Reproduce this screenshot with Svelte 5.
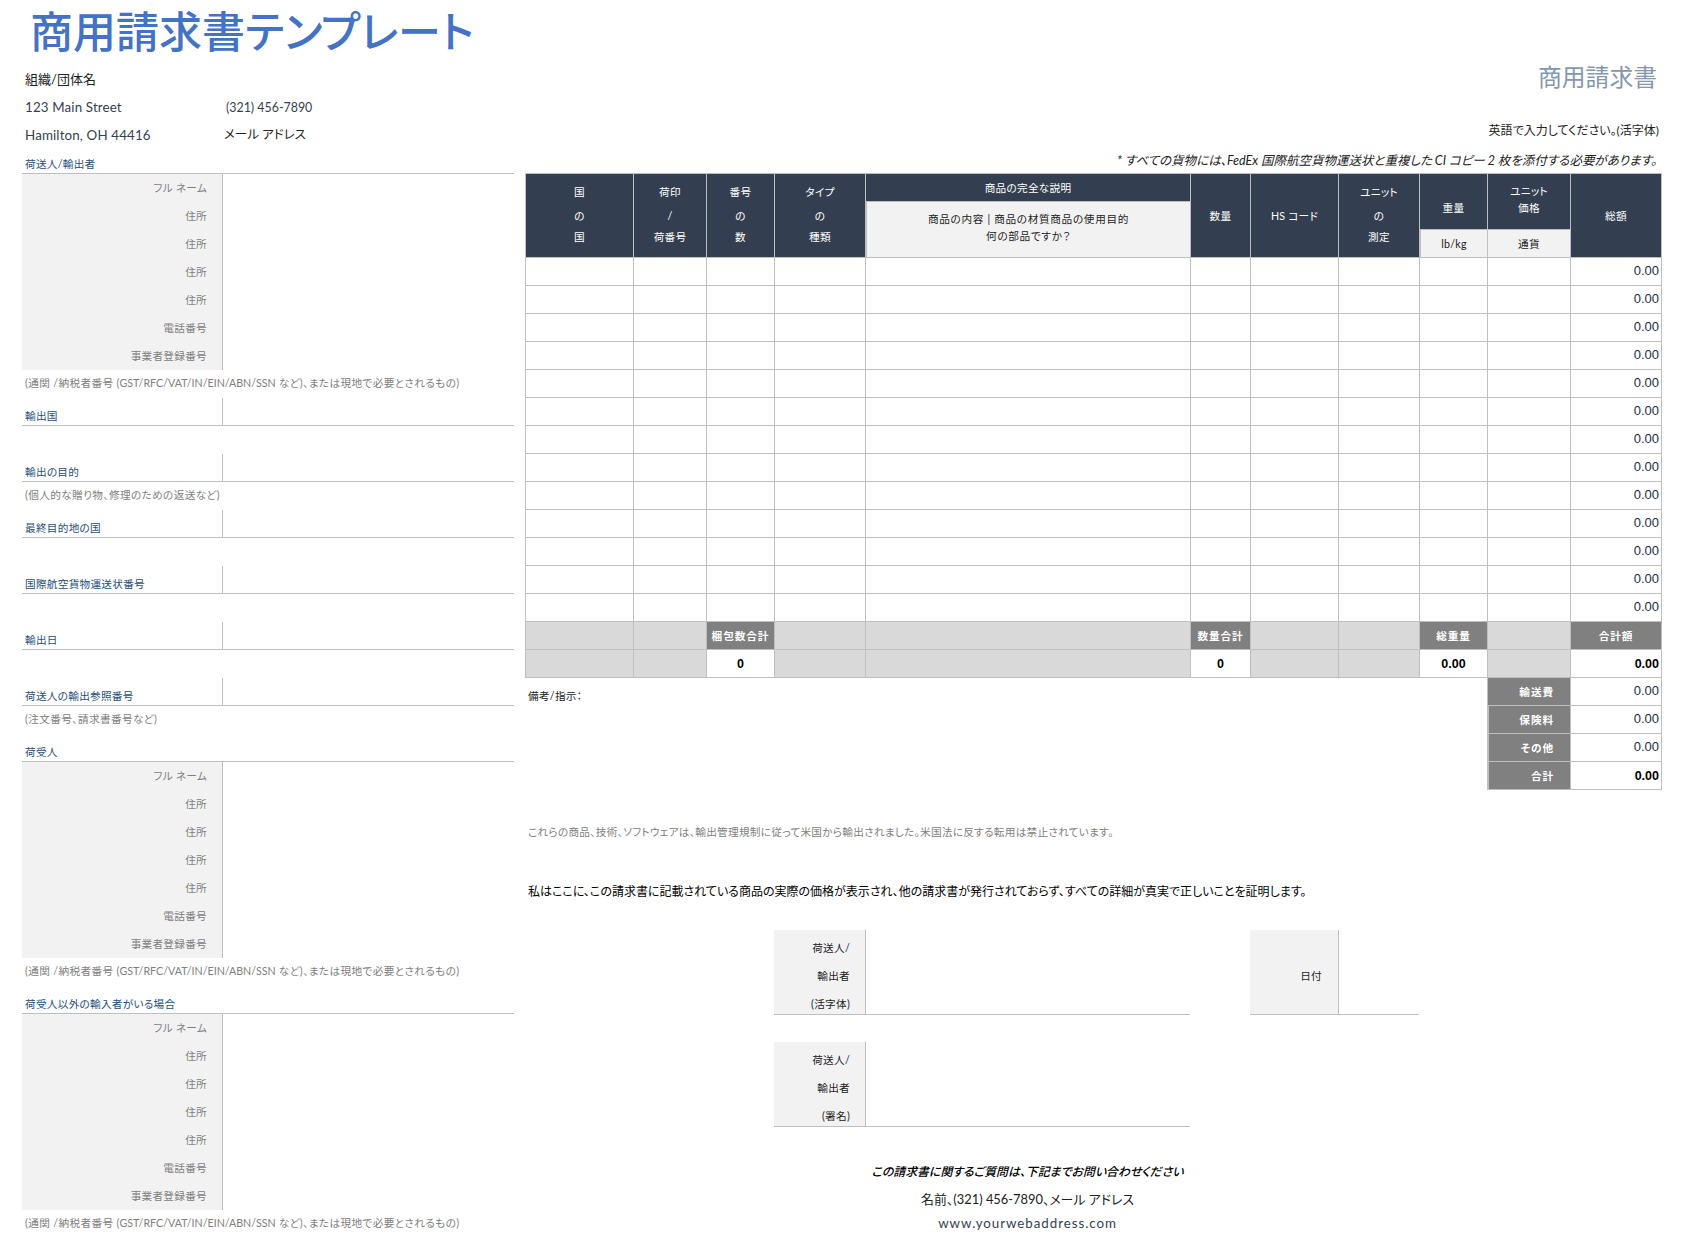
<script>
  const cols = [109, 73, 68, 91, 325, 60, 88, 81, 68, 83, 91];
  const party = ['フル ネーム', '住所', '住所', '住所', '住所', '電話番号', '事業者登録番号'];
  const rows = Array.from({ length: 13 });
  const stacks = [
    ['国', 'の', '国'],
    ['荷印', '/', '荷番号'],
    ['番号', 'の', '数'],
    ['タイプ', 'の', '種類']
  ];
  const extras = [
    ['輸送費', false],
    ['保険料', false],
    ['その他', false],
    ['合計', true]
  ];
</script>

{#snippet partyBlock()}
  <div class="party">
    <div class="party-labels">
      {#each party as label}
        <div class="party-label">{label}</div>
      {/each}
    </div>
    <div class="party-fill"></div>
  </div>
  <div class="row note"><span>(通関 /納税者番号 <span class="latin">(GST/RFC/VAT/IN/EIN/ABN/SSN</span> など)、または現地で必要とされるもの)</span></div>
{/snippet}

{#snippet field(label)}
  <div class="row field">
    <span class="navy">{label}</span>
    <span class="field-fill"></span>
  </div>
{/snippet}

<div class="page">
  <section class="left">
    <h1 class="title">商用請求書テンプレート</h1>
    <div class="row org">組織/団体名</div>
    <div class="row contact"><span class="c1">123 Main Street</span><span class="tel">(321) 456-7890</span></div>
    <div class="row contact"><span class="c1">Hamilton, OH 44416</span><span class="jp">メール アドレス</span></div>
    <div class="row section navy">荷送人/輸出者</div>
    {@render partyBlock()}
    {@render field('輸出国')}
    <div class="row"></div>
    {@render field('輸出の目的')}
    <div class="row note">(個人的な贈り物、修理のための返送など)</div>
    {@render field('最終目的地の国')}
    <div class="row"></div>
    {@render field('国際航空貨物運送状番号')}
    <div class="row"></div>
    {@render field('輸出日')}
    <div class="row"></div>
    {@render field('荷送人の輸出参照番号')}
    <div class="row note">(注文番号、請求書番号など)</div>
    <div class="row section navy">荷受人</div>
    {@render partyBlock()}
    <div class="row section navy">荷受人以外の輸入者がいる場合</div>
    {@render partyBlock()}
  </section>

  <section class="right">
    <header class="head">
      <div class="doc-title">商用請求書</div>
      <div class="hint">英語で入力してください。(活字体)</div>
      <div class="warn">* すべての貨物には、FedEx 国際航空貨物運送状と重複した CI コピー 2 枚を添付する必要があります。</div>
    </header>

    <table>
      <colgroup>
        {#each cols as w}
          <col style="width:{w}px" />
        {/each}
      </colgroup>
      <thead>
        <tr>
          {#each stacks as s}
            <th rowspan="3" class="stack">
              {#each s as line}<span>{line}</span>{/each}
            </th>
          {/each}
          <th>商品の完全な説明</th>
          <th rowspan="3">数量</th>
          <th rowspan="3">HS コード</th>
          <th rowspan="3" class="stack"><span>ユニット</span><span>の</span><span>測定</span></th>
          <th rowspan="2" class="weight">重量</th>
          <th rowspan="2" class="pair"><span>ユニット</span><span>価格</span></th>
          <th rowspan="3">総額</th>
        </tr>
        <tr>
          <th rowspan="2" class="light sub"><span>商品の内容 | 商品の材質商品の使用目的</span><span>何の部品ですか？</span></th>
        </tr>
        <tr>
          <th class="light">lb/kg</th>
          <th class="light">通貨</th>
        </tr>
      </thead>
      <tbody>
        {#each rows as _}
          <tr>
            {#each cols.slice(0, 10) as _c}<td></td>{/each}
            <td class="num">0.00</td>
          </tr>
        {/each}
        <tr>
          <td class="g"></td><td class="g"></td><td class="d">梱包数合計</td><td class="g"></td><td class="g"></td>
          <td class="d">数量合計</td><td class="g"></td><td class="g"></td><td class="d">総重量</td><td class="g"></td><td class="d">合計額</td>
        </tr>
        <tr>
          <td class="g"></td><td class="g"></td><td class="val">0</td><td class="g"></td><td class="g"></td>
          <td class="val">0</td><td class="g"></td><td class="g"></td><td class="val">0.00</td><td class="g"></td><td class="num strong">0.00</td>
        </tr>
        {#each extras as [label, strong], i}
          <tr>
            {#if i === 0}
              <td colspan="9" rowspan="4" class="remarks">備考/指示：</td>
            {/if}
            <td class="d end">{label}</td>
            <td class="num" class:strong>0.00</td>
          </tr>
        {/each}
      </tbody>
    </table>

    <p class="legal">これらの商品、技術、ソフトウェアは、輸出管理規制に従って米国から輸出されました。米国法に反する転用は禁止されています。</p>
    <p class="cert">私はここに、この請求書に記載されている商品の実際の価格が表示され、他の請求書が発行されておらず、すべての詳細が真実で正しいことを証明します。</p>

    <div class="sign">
      <div class="sign-label"><span>荷送人/</span><span>輸出者</span><span>(活字体)</span></div>
      <div class="sign-fill"></div>
      <div class="date-label">日付</div>
      <div class="date-fill"></div>
    </div>
    <div class="sign second">
      <div class="sign-label"><span>荷送人/</span><span>輸出者</span><span>(署名)</span></div>
      <div class="sign-fill"></div>
    </div>

    <footer class="foot">
      <div class="ask">この請求書に関するご質問は、下記までお問い合わせください</div>
      <div class="who">名前、(321) 456-7890、メール アドレス</div>
      <div class="web">www.yourwebaddress.com</div>
    </footer>
  </section>
</div>

<style>
  :global(body) {
    margin: 0;
    background: #fff;
  }
  .page {
    display: flex;
    gap: 11px;
    padding-left: 22px;
    width: 1666px;
    height: 1251px;
    overflow: hidden;
    font-family: "Lato", "Noto Sans CJK JP", sans-serif;
    font-size: 10.67px;
    letter-spacing: 0.25px;
    font-feature-settings: "palt";
    color: #000;
  }
  .left {
    width: 492px;
    flex: none;
  }
  .right {
    width: 1137px;
    flex: none;
  }
  .title {
    height: 62px;
    margin: 0;
    padding-left: 8px;
    font-size: 43px;
    line-height: 64px;
    font-weight: 500;
    letter-spacing: 0;
    color: #4472c4;
    white-space: nowrap;
  }
  .row {
    height: 28px;
    box-sizing: border-box;
    display: flex;
    align-items: center;
    padding-left: 3px;
    white-space: nowrap;
  }
  .org {
    font-size: 13px;
    letter-spacing: 0;
    color: #222;
    padding-top: 4px;
  }
  .contact {
    font-size: 13.33px;
    color: #333f50;
    letter-spacing: 0.15px;
    padding-top: 6px;
  }
  .c1 {
    width: 201px;
  }
  .tel {
    font-size: 12.4px;
    letter-spacing: 0;
  }
  .jp {
    margin-left: -2px;
    color: #222;
    font-size: 12.5px;
    letter-spacing: 0;
    line-height: 14px;
  }
  .navy {
    color: #1f4e79;
  }
  .section {
    align-items: flex-end;
    padding-bottom: 2px;
    border-bottom: 1px solid #bfbfbf;
  }
  .party {
    display: grid;
    grid-template-columns: 200px 1fr;
  }
  .party-labels {
    background: #f2f2f2;
  }
  .party-label {
    height: 28px;
    line-height: 28px;
    text-align: right;
    padding-right: 15px;
    color: #7f7f7f;
  }
  .party-fill,
  .field-fill {
    border-left: 1px solid #bfbfbf;
  }
  .note {
    color: #808080;
    padding-bottom: 3px;
    letter-spacing: 0.35px;
  }
  .latin {
    letter-spacing: 0;
  }
  .field {
    padding: 0;
    display: grid;
    grid-template-columns: 200px 1fr;
    align-items: stretch;
    border-bottom: 1px solid #bfbfbf;
  }
  .field .navy {
    align-self: end;
    padding: 0 0 2px 3px;
  }
  .head {
    height: 173px;
    display: flex;
    flex-direction: column;
    align-items: flex-end;
    padding: 62px 5px 0 0;
    box-sizing: border-box;
    white-space: nowrap;
    letter-spacing: 0;
  }
  .doc-title {
    height: 56px;
    line-height: 31px;
    font-size: 23.8px;
    color: #8497b0;
  }
  .hint {
    height: 28px;
    line-height: 25px;
    font-size: 12px;
    color: #222;
    margin-right: -2px;
  }
  .warn {
    height: 27px;
    line-height: 29px;
    font-size: 12.5px;
    font-style: italic;
    color: #222;
  }
  table {
    table-layout: fixed;
    width: 1137px;
    border-collapse: separate;
    border-spacing: 0;
    border-top: 1px solid #bfbfbf;
  }
  tr {
    height: 28px;
  }
  th,
  td {
    height: 28px;
    padding: 0;
    box-sizing: border-box;
    border-right: 1px solid #bfbfbf;
    border-bottom: 1px solid #bfbfbf;
    font-size: 10.67px;
    font-weight: 400;
    text-align: center;
    vertical-align: middle;
    white-space: nowrap;
  }
  th:first-child,
  td:first-child {
    border-left: 1px solid #bfbfbf;
  }
  th {
    background: #333f50;
    color: #fff;
  }
  th.stack {
    vertical-align: top;
    padding-top: 7px;
  }
  th.stack span {
    display: block;
    line-height: 21px;
  }
  th.stack span:first-child {
    margin-bottom: 3px;
  }
  th.weight {
    padding-top: 12px;
  }
  th.pair {
    padding-bottom: 5px;
  }
  th.pair span {
    display: block;
    line-height: 17px;
  }
  th.light {
    background: #f2f2f2;
    color: #222;
  }
  th.sub {
    padding-bottom: 6px;
  }
  th.sub span {
    display: block;
    line-height: 17px;
    letter-spacing: 0.65px;
  }
  .num {
    text-align: right;
    padding: 0 2px 2px 0;
    font-family: "Liberation Sans", sans-serif;
    font-size: 13px;
    letter-spacing: 0;
    color: #1f2a44;
  }
  .strong {
    font-weight: 700;
    color: #000;
    font-size: 12.5px;
    padding-bottom: 0;
  }
  .g {
    background: #d9d9d9;
  }
  .d {
    background: #808080;
    color: #fff;
    font-weight: 700;
    letter-spacing: 0.9px;
  }
  .end {
    text-align: right;
    padding-right: 16px;
  }
  .val {
    font-family: "Liberation Sans", sans-serif;
    font-size: 12.5px;
    font-weight: 700;
    letter-spacing: 0;
    background: #fff;
  }
  td.remarks {
    border: none;
    border-right: 1px solid #bfbfbf;
    vertical-align: top;
    text-align: left;
    padding: 10px 0 0 3px;
    color: #222;
  }
  .legal {
    margin: 28px 0 0;
    height: 28px;
    line-height: 28px;
    padding-left: 3px;
    color: #808080;
    white-space: nowrap;
  }
  .cert {
    margin: 28px 0 0;
    height: 28px;
    line-height: 36px;
    padding-left: 3px;
    font-size: 12px;
    letter-spacing: 0;
    white-space: nowrap;
  }
  .sign {
    margin-top: 28px;
    height: 84px;
    display: grid;
    grid-template-columns: 91px 325px 60px 88px 81px;
    margin-left: 249px;
    width: 645px;
  }
  .second {
    grid-template-columns: 91px 325px;
    width: 416px;
  }
  .sign-label {
    background: #f2f2f2;
    border-bottom: 1px solid #bfbfbf;
    text-align: right;
    padding-right: 15px;
    display: flex;
    flex-direction: column;
    color: #222;
    box-sizing: border-box;
  }
  .sign-label span {
    height: 28px;
    flex: none;
    line-height: 36px;
    white-space: nowrap;
  }
  .sign-fill,
  .date-fill {
    border-left: 1px solid #bfbfbf;
    border-bottom: 1px solid #bfbfbf;
  }
  .sign-fill {
    grid-column: 2;
  }
  .date-label {
    grid-column: 4;
    background: #f2f2f2;
    border-bottom: 1px solid #bfbfbf;
    box-sizing: border-box;
    display: flex;
    align-items: center;
    justify-content: flex-end;
    padding: 6px 16px 0 0;
    color: #222;
  }
  .date-fill {
    grid-column: 5;
  }
  .foot {
    margin: 32px 0 0 340px;
    width: 325px;
    text-align: center;
    white-space: nowrap;
    letter-spacing: 0;
  }
  .ask {
    height: 28px;
    line-height: 28px;
    font-size: 11.9px;
    font-style: italic;
    font-weight: 500;
  }
  .who {
    height: 26px;
    line-height: 26px;
    font-size: 12.9px;
    color: #222;
  }
  .web {
    height: 26px;
    line-height: 23px;
    font-size: 13.33px;
    letter-spacing: 0.95px;
    color: #333f50;
  }
</style>
